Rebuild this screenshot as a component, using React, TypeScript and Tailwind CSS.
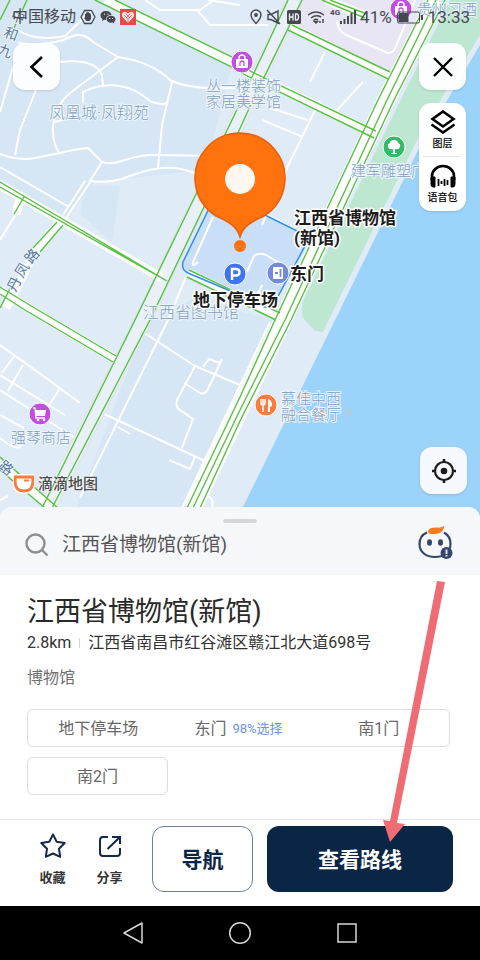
import type { ReactNode } from 'react';

const GATES = [
  { name: '地下停车场', hint: '' },
  { name: '东门', hint: '98%选择' },
  { name: '南1门', hint: '' },
];

const MINOR_ROADS = [
  'M145 0L160 10L200 10L214 0M198 11L210 25L268 25M208 0L240 5',
  'M18 30Q35 42 65 36L92 10',
  'M18 43Q50 47 70 37Q82 31 93 42L118 57Q152 62 170 80Q190 90 235 88',
  'M118 57L70 93Q57 104 54 120Q50 138 59 153',
  'M60 62Q95 58 102 75L103 85',
  'M54 122L85 115M83 103L83 92Q100 83 120 86Q135 88 150 101Q160 106 168 103',
  'M172 82L162 125L158 168M36 90L20 130L15 155M13 67L0 112',
  'M0 154Q20 162 40 157L60 153Q75 149 88 148L102 162Q110 165 125 160Q145 154 160 155L210 156',
  'M102 162L90 181Q110 184 130 176Q155 166 175 168Q190 170 200 176',
  'M91 181L66 218M85 181L63 215M0 167L69 207M16 214L0 240',
  'M325 52L310 82M363 82L337 110M267 107L308 120M262 120L303 137M320 100L287 168L262 225',
  'M337 20Q337 30 346 35L388 53Q394 53 397 44L415 0',
  'M213 217L193 262Q192 268 198 262M186 277L168 320M265 214L295 230',
  'M247 272L254 256Q258 252 266 255L283 265M262 285L250 310',
  'M143 332L195 366L240 385M168 320L80 498M102 413L205 461',
  'M195 366L177 400Q175 407 180 410L193 419L182 448',
  'M203 367L209 359L220 363M222 359L208 389Q205 395 200 393L184 383',
  'M118 427L130 434M195 457L190 469L169 460M205 495Q215 498 212 507',
  'M0 345L35 370L80 403M15 355L2 373M23 365L8 391M0 375L65 415M60 388L50 404',
  'M0 390L75 438M0 415L24 428M0 438Q14 450 20 447L30 432M0 500L8 496',
];

const WIDE_ROADS = [
  'M105 0L232 62L249 73L375 134',
  'M290 27L389 76M326 0L366 16',
  'M0 185L162 278',
  'M20 200L16 214M60 223L36 250L6 308M0 290L48 320L115 359',
  'M0 464L52 508',
  'M188 273L278 316',
];

const GREEN_LINES = [
  'M115 0L232 57L250 71L376 131M95 0L232 67L247 76L374 138',
  'M292 25L390 72M288 30L388 79M330 0L367 14M322 0L365 18',
  'M288 0L232 120L135 320L42 508M302 0L253 100L204 207L150 320L52 508',
  'M428 0L378 100L275 320L240 397L187 508',
  'M436 0L387 100L285 320L240 410L193 508',
  'M445 0L394 100L291 320L240 421L200 508',
  'M0 182L167 281M0 187L158 276L167 281M24 197L14 214',
  'M57 222L33 248M63 225L40 252M12 285L0 308',
  'M0 287L38 310L116 356M0 294L25 310L113 362',
  'M0 457L58 508M0 470L45 508M189 270L280 313M187 277L276 320M27 0L14 28M10 0L0 20',
];

function Poi({ x, y, color, children }: { x: number; y: number; color: string; children: ReactNode }) {
  return (
    <g transform={`translate(${x} ${y})`}>
      <circle r="11" fill={color} stroke="#fff" strokeWidth="1" />
      {children}
    </g>
  );
}

function Bag() {
  return (
    <>
      <rect x="-6" y="-3" width="12" height="9" rx="1" fill="#fff" />
      <path d="M-3 -2V-4Q-3 -7 0 -7Q3 -7 3 -4V-2" fill="none" stroke="#fff" strokeWidth="1.5" />
      <path d="M-2 4V1Q-2 -1 0 -1Q2 -1 2 1V4" fill="none" stroke="#c04fe0" strokeWidth="1.3" />
    </>
  );
}

function CityMap() {
  return (
    <svg
      className="absolute inset-0 h-full w-full"
      viewBox="0 0 480 519"
      preserveAspectRatio="xMidYMid slice"
      fill="none"
    >
      <rect width="480" height="519" fill="#dfebf7" />
      <path d="M0 0H95L232 66L205 170L95 182L66 218L0 178Z" fill="#d6e6f5" />
      <path d="M85 186L120 186L112 242L80 214Z" fill="#d6e6f5" />
      <path d="M145 325L190 300L275 320L180 519H72Z" fill="#d6e6f5" />
      <path d="M302 0L292 25L390 74L427 0Z" fill="#e8e5f5" />
      <path d="M450 0H480V35L420 134L333 311L323 332L315 331L303 318Q300 308 304 299L386 130Z" fill="#bde7d0" />
      <path d="M480 45L420 146L340 310L237 519H480Z" fill="#9cd3fb" />

      <path
        d="M217 192L183 262Q181 270 188 273L228 290L262 306Q271 310 275 302L305 246Q309 238 301 233L265 215Z"
        fill="#c9dff8"
      />
      <g stroke="#fff" strokeWidth="2" strokeLinejoin="round">
        {MINOR_ROADS.map((d) => (
          <path key={d} d={d} />
        ))}
      </g>
      <path d="M270 322L182 508" stroke="#fff" strokeWidth="2" />
      <path d="M295 0L242 112L143 320L47 508" stroke="#e2e2e8" strokeWidth="17" />
      <path d="M295 0L242 112L143 320L47 508" stroke="#e9f0f8" strokeWidth="15" />
      <path d="M436 0L386 100L283 320L240 409L193 508" stroke="#fff" strokeWidth="18" />
      <g stroke="#fff" strokeWidth="9">
        {WIDE_ROADS.map((d) => (
          <path key={d} d={d} />
        ))}
      </g>
      <path
        d="M217 192L183 262Q181 270 188 273L228 290L262 306Q271 310 275 302L305 246Q309 238 301 233L265 215Z"
        stroke="#318cf0"
        strokeWidth="1.5"
      />
      <g stroke="#58c142" strokeWidth="1.4">
        {GREEN_LINES.map((d) => (
          <path key={d} d={d} />
        ))}
      </g>

      <g
        className="text-[15px] font-light"
        fill="#7d9dc0"
        stroke="#eef5fc"
        strokeWidth="2"
        paintOrder="stroke"
      >
        <text x="49" y="118" className="text-[16px]">凤凰城·凤翔苑</text>
        <text x="206" y="91">丛一楼装饰</text>
        <text x="206" y="107">家居美学馆</text>
        <text x="351" y="176">建军雕塑广</text>
        <text x="143" y="318" className="text-[16px]">江西省图书馆</text>
        <text x="281" y="404">慕佳中西</text>
        <text x="281" y="420">融合餐厅</text>
        <text x="11" y="443">强琴商店</text>
        <text x="417" y="15">贵州习酒</text>
      </g>
      <g
        className="text-[14px]"
        fill="#58779c"
        stroke="#eef5fc"
        strokeWidth="2"
        paintOrder="stroke"
        textAnchor="middle"
      >
        <text transform="translate(18 17) rotate(20)" y="5">中</text>
        <text transform="translate(11 34) rotate(20)" y="5">和</text>
        <text transform="translate(5 51) rotate(20)" y="5">九</text>
        <text transform="translate(14 284) rotate(-62)" y="5">丹</text>
        <text transform="translate(22 270) rotate(-58)" y="5">凤</text>
        <text transform="translate(32 256) rotate(-50)" y="5">路</text>
        <text transform="translate(6 468) rotate(40)" y="5">路</text>
      </g>

      <Poi x={242} y={62} color="#c04fe0"><Bag /></Poi>
      <Poi x={401} y={9} color="#c04fe0"><Bag /></Poi>
      <Poi x={394} y={147} color="#35b868">
        <path d="M0 -7Q4 -7 4 -4Q7 -3 6 0Q5 3 1 2L1 6H3V7H-3V6H-1V2Q-5 3 -6 0Q-7 -3 -4 -4Q-4 -7 0 -7Z" fill="#fff" />
      </Poi>
      <Poi x={266} y={405} color="#fb7b3c">
        <path d="M-5 -6V-2Q-5 0 -3 0Q-1 0 -1 -2V-6M-3 -6V7" stroke="#fff" strokeWidth="1.5" />
        <path d="M2 7V-6Q6 -5 6 0Q6 2 4 2V7Z" fill="#fff" />
      </Poi>
      <Poi x={40} y={414} color="#c04fe0">
        <path d="M-5 -4H6L5 2H-4Z" fill="#fff" />
        <path d="M-7 -6H-5L-4 4H5" stroke="#fff" strokeWidth="1.3" />
        <circle cx="-2" cy="6" r="1.3" fill="#fff" />
        <circle cx="4" cy="6" r="1.3" fill="#fff" />
      </Poi>
      <Poi x={235} y={274} color="#3f74f0">
        <path d="M-3 6V-5H1Q4.500 -5 4.500 -1.700Q4.500 1.500 1 1.500H-3" stroke="#fff" strokeWidth="2.400" />
      </Poi>
      <Poi x={278} y={273} color="#7389dc">
        <rect x="-5" y="-6" width="10" height="12" rx="1" fill="#fff" />
        <path d="M2.500 -4V4M-3 0H0" stroke="#7389dc" strokeWidth="1.800" />
      </Poi>

      <path
        d="M215 215.500A45 45 0 1 1 265 215.500C250 222 243 227 240 237C237 227 230 222 215 215.500Z"
        fill="#ff720e"
        stroke="#e85f08"
        strokeWidth="1.500"
      />
      <circle cx="240" cy="179" r="15" fill="#fff7f0" />
      <circle cx="240" cy="246" r="6" fill="#ff720e" />

      <g
        className="text-[17px] font-bold"
        fill="#1c1c1c"
        stroke="#fff"
        strokeWidth="3"
        strokeLinejoin="round"
        paintOrder="stroke"
      >
        <text x="294" y="224">江西省博物馆</text>
        <text x="294" y="244">(新馆)</text>
        <text x="290" y="280">东门</text>
        <text x="193" y="306">地下停车场</text>
      </g>
    </svg>
  );
}

function StatusBar() {
  return (
    <div className="flex h-[34px] items-center justify-between pr-[10px] pl-3 text-[#45494f]">
      <div className="flex items-center gap-1 text-[16px] leading-none">
        <span>中国移动</span>
        <svg className="h-4 w-4" viewBox="0 0 16 16" fill="none">
          <path d="M4.500 1.500H11.500L15 8L11.500 14.500H4.500L1 8Z" stroke="currentColor" strokeWidth="1.300" strokeLinejoin="round" />
          <path d="M5 8V5H6V3.500H7.500V3H8.800V4H10.200V5.500H11V10L9.500 12H6.500L4 9Z" fill="currentColor" />
        </svg>
        <svg className="h-4 w-4" viewBox="0 0 16 16">
          <path d="M6 2C2.700 2 .5 4 .5 6.500C.5 8 1.300 9.300 2.500 10L2 12L4.300 10.800L6 11A5 4.500 0 0 1 11.500 6C11 3.500 9 2 6 2Z" fill="currentColor" />
          <path d="M11 6.800C8.500 6.800 6.700 8.300 6.700 10.300S8.500 13.800 11 13.800L12.500 13.500L14.300 14.500L14 12.900C15 12.200 15.500 11.300 15.500 10.300C15.500 8.300 13.500 6.800 11 6.800Z" fill="currentColor" />
          <path d="M4 5.200h1M7.500 5.200h1M9.200 9.500h1M12 9.500h1" stroke="#fff" strokeWidth="1" />
        </svg>
        <svg className="h-4 w-4" viewBox="0 0 16 16">
          <rect width="16" height="16" fill="#e44b4b" />
          <path d="M8 14L2.500 8Q1 5 3.500 3Q6 2 8 4.500Q10 2 12.500 3Q15 5 13.500 8Z" fill="#fbe3dc" />
          <path d="M4 6L8 10L12 6M5.500 4.500L10 9M10.500 4.500L6 9M8 10V13" fill="none" stroke="#e44b4b" strokeWidth=".7" />
        </svg>
      </div>
      <div className="flex items-center text-[17px] leading-none">
        <svg className="mr-1 h-4 w-3" viewBox="0 0 12 16" fill="none" stroke="currentColor" strokeWidth="1.400">
          <path d="M6 14.500Q1 9 1 6A5 5 0 0 1 11 6Q11 9 6 14.500Z" />
          <circle cx="6" cy="6" r="1.200" fill="currentColor" />
        </svg>
        <svg className="mr-1 h-4 w-4" viewBox="0 0 16 16" fill="none" stroke="currentColor" strokeWidth="1.400">
          <path d="M2 5.500H5L12 2V14L5 10.500H2ZM1 1L14 15" />
        </svg>
        <svg className="mr-1 h-4 w-4" viewBox="0 0 16 16">
          <rect x="1" y="1" width="14" height="14" rx="1.500" fill="currentColor" />
          <path d="M3.500 4.500V11.500M7 4.500V11.500M3.500 8H7M9.500 5V11H10.500Q12.500 11 12.500 8Q12.500 5 10.500 5Z" fill="none" stroke="#eef3f8" strokeWidth="1.300" />
        </svg>
        <svg className="mr-1 h-4 w-5" viewBox="0 0 20 16" fill="none" stroke="currentColor" strokeWidth="1.500">
          <path d="M2 6Q10 0 18 6M5 9Q10 5 15 8M7.500 11.500Q10 9.500 12 11" />
          <path d="M10 14L8.500 12.500H11.500ZM14 12V14M17 10V14" />
        </svg>
        <div className="flex">
          <span className="text-[8px] leading-none font-bold">4G</span>
          <svg className="h-4 w-4" viewBox="0 0 16 16" stroke="currentColor" strokeWidth="2">
            <path d="M1 15V12M4.500 15V10M8 15V7M11.500 15V4M15 15V1" />
          </svg>
        </div>
        <span className="ml-1">41%</span>
        <svg className="mx-1 h-4 w-7" viewBox="0 0 28 16" fill="none" stroke="currentColor">
          <rect x="1.500" y="3" width="22" height="11" rx="1.500" />
          <rect x="3" y="4.500" width="9" height="8" fill="currentColor" />
          <path d="M26 6V11" strokeWidth="2" />
        </svg>
        <span>13:33</span>
      </div>
    </div>
  );
}

function MapTools() {
  return (
    <div className="flex items-start justify-between pt-[9px] pr-[14px] pl-[13px]">
      <button aria-label="返回" className="flex size-[47px] items-center justify-center rounded-xl bg-white/90 shadow-sm">
        <svg className="size-6" viewBox="0 0 24 24" fill="none" stroke="#000" strokeWidth="2.600">
          <path d="M17 2L6.500 12L17 22" />
        </svg>
      </button>
      <div className="flex flex-col gap-[13px]">
        <button aria-label="关闭" className="flex size-[47px] items-center justify-center rounded-xl bg-white/95 shadow-sm">
          <svg className="size-6" viewBox="0 0 24 24" fill="none" stroke="#000" strokeWidth="2.400">
            <path d="M3 3L21 21M21 3L3 21" />
          </svg>
        </button>
        <div className="flex w-[47px] flex-col rounded-xl bg-white px-1 text-[10px] leading-3 font-medium text-black shadow-sm">
          <button className="flex h-[54px] flex-col items-center justify-center gap-1 border-b border-gray-200">
            <svg className="h-6 w-[26px]" viewBox="0 0 26 24" fill="none" stroke="#000" strokeWidth="2.600">
              <path d="M13 1.500L23.500 9L13 16.500L2.500 9Z" />
              <path d="M1.500 14.500L13 22.500L24.500 14.500" />
            </svg>
            图层
          </button>
          <button className="flex h-[54px] flex-col items-center justify-center gap-1">
            <svg className="h-6 w-[26px]" viewBox="0 0 26 24" fill="none" stroke="#000">
              <path d="M2 16V12A11 10 0 0 1 24 12V16" strokeWidth="2.600" />
              <path d="M1 13H5V23H3Q1 23 1 20ZM25 13H21V23H23Q25 23 25 20Z" fill="#000" strokeWidth="1" />
              <path d="M8.500 15V22M11.500 17V20M14.500 15V22M17.500 16V21" strokeWidth="1.800" />
            </svg>
            语音包
          </button>
        </div>
      </div>
    </div>
  );
}

function MapFooter() {
  return (
    <div className="mt-auto flex items-end justify-between pr-[13px] pb-[25px] pl-[13px]">
      <div className="flex items-center gap-[3px]">
        <svg className="h-5 w-[22px]" viewBox="0 0 22 20" fill="none">
          <path d="M2 2.500H20V8Q20 17.500 11 17.500Q2 17.500 2 8Z" stroke="#fff" strokeWidth="5" strokeLinejoin="round" />
          <path d="M2.200 3H19.800V8Q19.800 17 11 17Q2.200 17 2.200 8Z" fill="#fff" stroke="#fb7b3c" strokeWidth="2.800" />
          <path d="M11 6.500H16" stroke="#fb7b3c" strokeWidth="2" />
        </svg>
        <span className="text-[15px] leading-5 font-medium text-[#4a4a4a] [text-shadow:0_0_2px_#fff,0_0_2px_#fff]">滴滴地图</span>
      </div>
      <button aria-label="定位" className="flex size-[47px] items-center justify-center rounded-xl bg-[#f5f9fd] shadow-sm">
        <svg className="size-6" viewBox="0 0 24 24" fill="none" stroke="#1c1c1c" strokeWidth="2.200">
          <circle cx="12" cy="12" r="9" />
          <circle cx="12" cy="12" r="3.300" fill="#1c1c1c" stroke="none" />
          <path d="M12 0V4M12 20V24M0 12H4M20 12H24" strokeWidth="2.600" />
        </svg>
      </button>
    </div>
  );
}

function SearchBar() {
  return (
    <div className="flex flex-col items-center rounded-t-xl border-b border-gray-100 bg-[#f6f7fa] pt-3 pb-[7px]">
      <div className="h-1 w-[34px] rounded-full bg-[#d7d7d9]" />
      <div className="flex h-11 w-full items-center pr-[27px] pl-[25px]">
        <svg className="size-6" viewBox="0 0 24 24" fill="none" stroke="#8e8e8e" strokeWidth="2.400">
          <circle cx="10.500" cy="10.500" r="9" />
          <path d="M17 17L22.500 22.500" />
        </svg>
        <input
          aria-label="搜索地点"
          defaultValue="江西省博物馆(新馆)"
          className="ml-[13px] min-w-0 flex-1 bg-transparent text-[19px] leading-6 text-[#555] outline-none"
        />
        <button aria-label="助手" className="mb-1">
          <svg className="size-9" viewBox="0 0 36 36" fill="none">
            <path d="M10 7.500C4 10 2.500 15 2.500 19C2.500 27 9 32 18 32C27 32 33.500 27 33.500 19C33.500 14 31.500 10 27 7.500" stroke="#34466a" strokeWidth="2.200" />
            <path d="M11 6C12 3 16 2 20 2.500C23 3 25 2 27 1C27 6 23 9 18 9C13 9 10.500 8.500 11 6Z" fill="#fb7a1e" />
            <ellipse cx="12.500" cy="17.500" rx="2.500" ry="3.300" fill="#34466a" />
            <ellipse cx="23.500" cy="17.500" rx="2.500" ry="3.300" fill="#34466a" />
            <circle cx="29.500" cy="28" r="6" fill="#34466a" />
            <path d="M29.500 24.500V29M29.500 30V31.500" stroke="#dbe2ef" strokeWidth="2" />
          </svg>
        </button>
      </div>
    </div>
  );
}

function PlaceInfo() {
  return (
    <div className="px-[27px] pt-[21px] pb-6">
      <h1 className="text-[27px] leading-8 text-[#2a2a2a]">江西省博物馆(新馆)</h1>
      <div className="mt-1 flex items-center text-[16px] leading-[22px] text-[#333]">
        <span>2.8km</span>
        <span className="mx-2 h-[10px] w-px bg-gray-300" />
        <span>江西省南昌市红谷滩区赣江北大道698号</span>
      </div>
      <div className="mt-3 text-[16px] leading-6 text-[#707070]">博物馆</div>
      <div className="mt-[19px] mr-[3px] text-[16px] text-[#666]">
        <div className="grid h-[38px] grid-cols-3 rounded-md border border-[#dcdcdc]">
          {GATES.map((gate) => (
            <button key={gate.name} className="flex items-center justify-center gap-[6px] pt-0.5">
              {gate.name}
              {gate.hint && <span className="text-[13px] text-[#6a94f0]">{gate.hint}</span>}
            </button>
          ))}
        </div>
        <button className="mt-[10px] h-[38px] w-1/3 rounded-md border border-[#dcdcdc] pt-0.5">南2门</button>
      </div>
    </div>
  );
}

function ActionBar() {
  return (
    <div className="flex items-center border-t border-gray-200 pt-[6px] pr-[27px] pb-[14px] pl-6 font-bold">
      <button className="flex w-[57px] flex-col items-center gap-[9px] pt-0.5 text-[13px] leading-5 text-[#333]">
        <svg className="size-[26px]" viewBox="0 0 26 26" fill="none" stroke="#17294a" strokeWidth="2" strokeLinejoin="round">
          <path d="M13 1.500L16.700 8.700L24.700 10L19 15.800L20.200 23.800L13 20.500L5.800 23.800L7 15.800L1.300 10L9.300 8.700Z" />
        </svg>
        收藏
      </button>
      <button className="flex w-[57px] flex-col items-center gap-[9px] pt-0.5 text-[13px] leading-5 text-[#333]">
        <svg className="size-[26px]" viewBox="0 0 26 26" fill="none" stroke="#17294a" strokeWidth="2">
          <path d="M11 4H6Q3 4 3 7V20Q3 23 6 23H20Q23 23 23 20V15" />
          <path d="M15 4H23V11M22.500 4.500L10.500 16" />
        </svg>
        分享
      </button>
      <button className="ml-[14px] h-[66px] w-[101px] rounded-xl border border-[#6f8096] bg-white pt-[3px] text-[21px] text-[#0a2444]">
        导航
      </button>
      <button className="ml-[14px] h-[66px] flex-1 rounded-xl bg-[#0a2645] pt-[3px] text-[21px] text-white">
        查看路线
      </button>
    </div>
  );
}

function SystemNav() {
  return (
    <div className="flex h-[54px] items-center justify-center gap-[83px] bg-black text-[#d6d6d6]">
      <button aria-label="后退">
        <svg className="size-6" viewBox="0 0 24 24" fill="none" stroke="currentColor" strokeWidth="1.500">
          <path d="M3 12L21 2V22Z" strokeLinejoin="round" />
        </svg>
      </button>
      <button aria-label="主页">
        <svg className="size-6" viewBox="0 0 24 24" fill="none" stroke="currentColor" strokeWidth="1.500">
          <circle cx="12" cy="12" r="10.300" />
        </svg>
      </button>
      <button aria-label="最近任务">
        <svg className="size-6" viewBox="0 0 24 24" fill="none" stroke="currentColor" strokeWidth="1.500">
          <rect x="3" y="3" width="18" height="18" />
        </svg>
      </button>
    </div>
  );
}

export default function App() {
  return (
    <div className="flex min-h-screen flex-col bg-white font-['Roboto','Noto_Sans_CJK_SC',sans-serif]">
      <section className="relative flex flex-1 flex-col overflow-hidden">
        <CityMap />
        <div className="relative flex flex-1 flex-col">
          <StatusBar />
          <MapTools />
          <MapFooter />
        </div>
      </section>
      <section className="relative -mt-3 rounded-t-xl bg-white">
        <SearchBar />
        <PlaceInfo />
        <ActionBar />
        <svg
          className="pointer-events-none absolute top-[74px] right-[35px] h-[262px] w-[62px]"
          viewBox="0 0 62 262"
        >
          <path d="M54 0L62 1L14 242L22 243L7 261L0 239L7 240Z" fill="#f06c75" />
        </svg>
      </section>
      <SystemNav />
    </div>
  );
}
